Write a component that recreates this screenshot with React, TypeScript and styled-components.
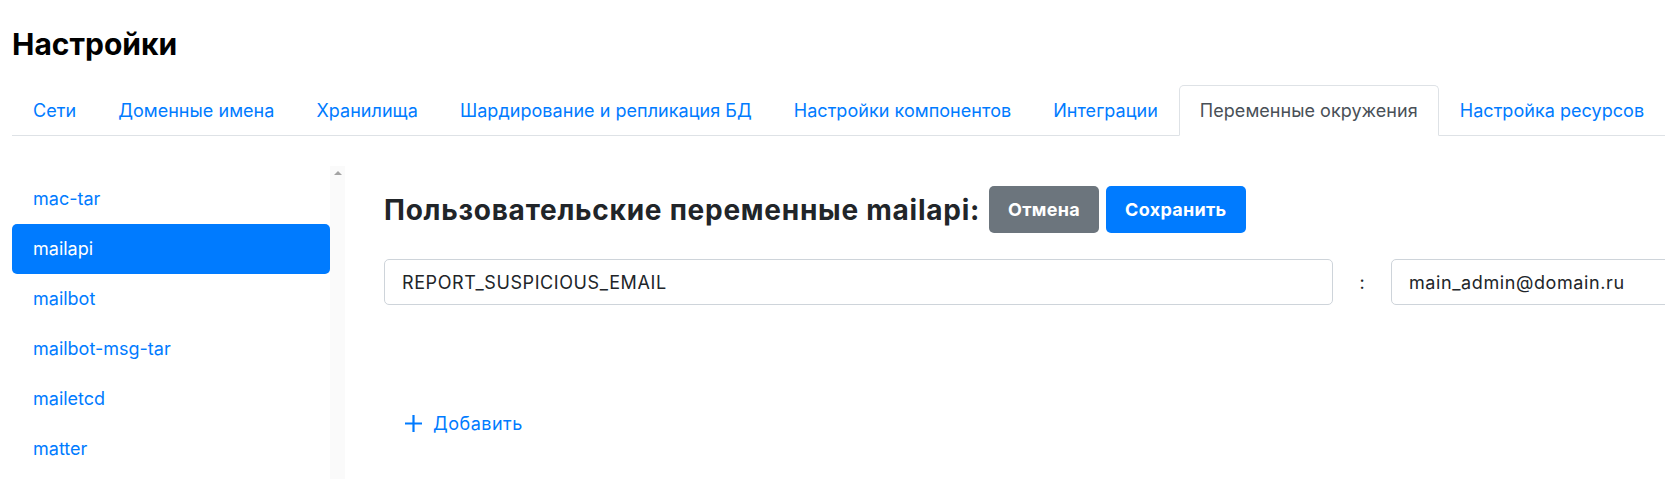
import styled, { createGlobalStyle } from "styled-components";
import { useState } from "react";

const GlobalStyle = createGlobalStyle`
  html, body {
    margin: 0;
    padding: 0;
    background: #fff;
    overflow: hidden;
  }
  body {
    font-family: Inter, "Noto Sans", sans-serif;
    color: #212529;
  }
  * {
    box-sizing: border-box;
  }
`;

const Page = styled.div`
  padding-left: 12px;
  width: 1665px;
  height: 479px;
  overflow: hidden;
`;

const PageTitle = styled.h1`
  margin: 26px 0 0;
  font-size: 30px;
  line-height: 36px;
  font-weight: 700;
  color: #000;
`;

const Tabs = styled.ul`
  display: flex;
  margin: 23px 0 0;
  padding: 0;
  list-style: none;
  border-bottom: 1px solid #dee2e6;
  white-space: nowrap;
`;

const Tab = styled.li<{ $active?: boolean }>`
  height: 51px;
  margin-bottom: -1px;
  padding: 0 20px;
  line-height: 49px;
  font-size: 18px;
  letter-spacing: 0.04px;
  border: 1px solid ${(p) => (p.$active ? "#dee2e6" : "transparent")};
  border-bottom-color: ${(p) => (p.$active ? "#fff" : "transparent")};
  border-radius: 5px 5px 0 0;
  background: ${(p) => (p.$active ? "#fff" : "transparent")};
  color: ${(p) => (p.$active ? "#495057" : "#007bff")};
  cursor: pointer;
`;

const Body = styled.div`
  display: flex;
  align-items: flex-start;
`;

const Side = styled.div`
  display: flex;
  margin-top: 30px;
  height: 320px;
`;

const ServiceList = styled.ul`
  width: 318px;
  margin: 0;
  padding: 8px 0 0;
  list-style: none;
`;

const Service = styled.li<{ $selected?: boolean }>`
  height: 50px;
  padding-left: 21px;
  line-height: 50px;
  font-size: 18px;
  border-radius: 5px;
  color: ${(p) => (p.$selected ? "#fff" : "#007bff")};
  background: ${(p) => (p.$selected ? "#007bff" : "transparent")};
  cursor: pointer;
`;

const ScrollTrack = styled.div`
  width: 15px;
  background: #fafafa;
  display: flex;
  justify-content: center;
  padding-top: 5px;
`;

const ScrollArrow = styled.span`
  width: 0;
  height: 0;
  border-left: 4px solid transparent;
  border-right: 4px solid transparent;
  border-bottom: 4px solid #a3a3a3;
`;

const Main = styled.div`
  flex: 1;
  padding-left: 39px;
  padding-top: 50px;
`;

const HeadRow = styled.div`
  display: flex;
  align-items: center;
  gap: 7px;
`;

const SubTitle = styled.h2`
  margin: 0 2px 0 0;
  font-size: 28px;
  letter-spacing: 0.75px;
  font-weight: 700;
  color: #212529;
  white-space: nowrap;
`;

const Button = styled.button<{ $variant: "secondary" | "primary" }>`
  height: 47px;
  padding: 0 19px;
  border: none;
  border-radius: 5px;
  font-family: inherit;
  font-size: 18px;
  font-weight: 700;
  letter-spacing: 0.3px;
  color: #fff;
  background: ${(p) => (p.$variant === "primary" ? "#007bff" : "#6c757d")};
  cursor: pointer;
`;

const VarRow = styled.div`
  display: grid;
  grid-template-columns: 949px 58px 949px;
  align-items: center;
  margin-top: 26px;
`;

const Field = styled.input`
  height: 46px;
  padding: 0 17px;
  border: 1px solid #ced4da;
  border-radius: 5px;
  font-family: inherit;
  font-size: 18px;
  letter-spacing: 0.6px;
  color: #212529;
  background: #fff;
  outline: none;
`;

const Colon = styled.span`
  text-align: center;
  font-size: 18px;
  color: #212529;
`;

const AddButton = styled.button`
  display: flex;
  align-items: center;
  gap: 10px;
  margin-top: 108px;
  padding: 0 0 0 20px;
  border: none;
  background: none;
  font-family: inherit;
  font-size: 18px;
  letter-spacing: 0.5px;
  color: #007bff;
  cursor: pointer;
`;

const tabs = [
  "Сети",
  "Доменные имена",
  "Хранилища",
  "Шардирование и репликация БД",
  "Настройки компонентов",
  "Интеграции",
  "Переменные окружения",
  "Настройка ресурсов",
];

const services = ["mac-tar", "mailapi", "mailbot", "mailbot-msg-tar", "mailetcd", "matter"];

export default function App() {
  const [selected, setSelected] = useState("mailapi");
  return (
    <Page>
      <GlobalStyle />
      <PageTitle>Настройки</PageTitle>
      <Tabs>
        {tabs.map((t) => (
          <Tab key={t} $active={t === "Переменные окружения"}>
            {t}
          </Tab>
        ))}
      </Tabs>
      <Body>
        <Side>
          <ServiceList>
            {services.map((s) => (
              <Service key={s} $selected={s === selected} onClick={() => setSelected(s)}>
                {s}
              </Service>
            ))}
          </ServiceList>
          <ScrollTrack>
            <ScrollArrow />
          </ScrollTrack>
        </Side>
        <Main>
          <HeadRow>
            <SubTitle>Пользовательские переменные {selected}:</SubTitle>
            <Button $variant="secondary">Отмена</Button>
            <Button $variant="primary">Сохранить</Button>
          </HeadRow>
          <VarRow>
            <Field defaultValue="REPORT_SUSPICIOUS_EMAIL" />
            <Colon>:</Colon>
            <Field defaultValue="main_admin@domain.ru" />
          </VarRow>
          <AddButton>
            <svg width="19" height="19" viewBox="0 0 19 19">
              <path d="M9.5 1v17M1 9.5h17" stroke="#007bff" strokeWidth="2.2" />
            </svg>
            Добавить
          </AddButton>
        </Main>
      </Body>
    </Page>
  );
}
